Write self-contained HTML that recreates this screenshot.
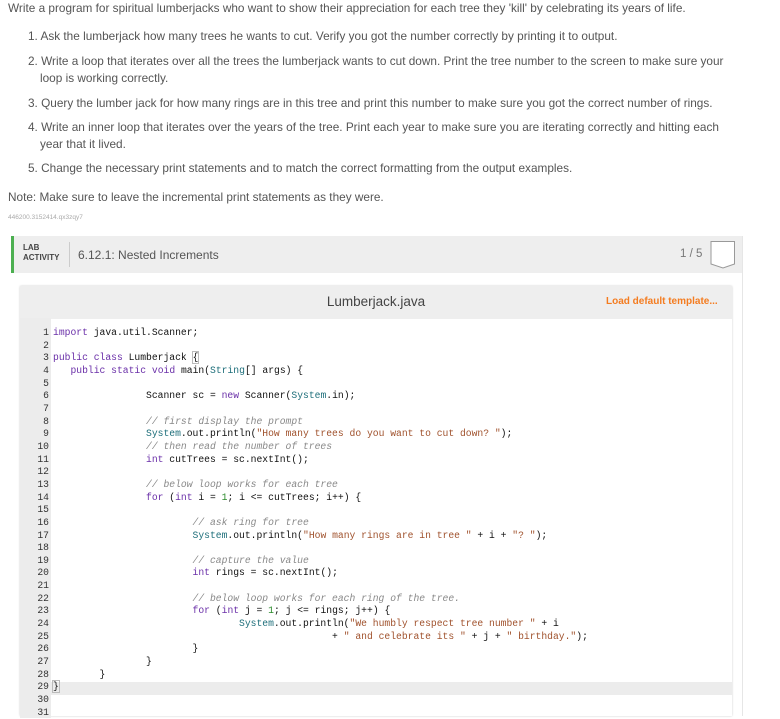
<!DOCTYPE html>
<html><head><style>
body{margin:0;width:780px;height:709px;overflow:hidden;background:#fff;font-family:"Liberation Sans",sans-serif;color:#555;position:relative}
.t{position:absolute;font-size:11.8px;white-space:nowrap;color:#555}
.lab{position:absolute;left:11px;top:236px;width:731px;height:480px;border-right:1px solid #e6e6e6}
.hdr{position:absolute;left:0;top:0;width:731px;height:37px;background:#eee;border-left:3px solid #4caf50;box-sizing:border-box}
.ed{position:absolute;left:20px;top:286px;width:712px;height:430px;box-shadow:0 0 2px #ccc;background:#fff}
.eh{position:absolute;left:0;top:0;width:712px;height:33px;background:#eee}
.gut{position:absolute;left:20px;top:318px;width:31px;height:400px;background:#ececec}
pre{margin:0;position:absolute;font-family:"Liberation Mono",monospace;font-size:9.7px;line-height:12.66px;color:#111}
.k{color:#6a2fa8}.s{color:#a0522d}.c{color:#888;font-style:italic}.y{color:#1d6e7a}.n{color:#2a8a2a}
.hl{position:absolute;left:51px;top:682px;width:681px;height:13px;background:#ececec}
</style></head><body>
<div class="t" style="left:8px;top:1px">Write a program for spiritual lumberjacks who want to show their appreciation for each tree they 'kill' by celebrating its years of life.</div>
<div class="t" style="left:28px;top:29px">1. Ask the lumberjack how many trees he wants to cut. Verify you got the number correctly by printing it to output.</div>
<div class="t" style="left:28px;top:54px">2. Write a loop that iterates over all the trees the lumberjack wants to cut down. Print the tree number to the screen to make sure your</div>
<div class="t" style="left:40px;top:71px">loop is working correctly.</div>
<div class="t" style="left:28px;top:96px">3. Query the lumber jack for how many rings are in this tree and print this number to make sure you got the correct number of rings.</div>
<div class="t" style="left:28px;top:120px">4. Write an inner loop that iterates over the years of the tree. Print each year to make sure you are iterating correctly and hitting each</div>
<div class="t" style="left:40px;top:137px">year that it lived.</div>
<div class="t" style="left:28px;top:161px">5. Change the necessary print statements and to match the correct formatting from the output examples.</div>
<div class="t" style="left:8px;top:190px">Note: Make sure to leave the incremental print statements as they were.</div>
<div class="t" style="left:8px;top:214px;font-size:6.5px;color:#aaa">446200.3152414.qx3zqy7</div>
<div class="lab"><div class="hdr">
<div style="position:absolute;left:9px;top:7px;font-size:8px;font-weight:bold;color:#444;line-height:10px">LAB<br>ACTIVITY</div>
<div style="position:absolute;left:55px;top:6px;width:1px;height:25px;background:#ccc"></div>
<div style="position:absolute;left:64px;top:12px;font-size:12px;color:#555">6.12.1: Nested Increments</div>
<div style="position:absolute;left:666px;top:12px;font-size:11.5px;color:#777">1 / 5</div>
<svg style="position:absolute;left:696px;top:4px" width="26" height="31"><path d="M1 1.5H24.5V24L13 28L1 24Z" fill="#fff" stroke="#999" stroke-width="1"/></svg>
</div></div>
<div class="ed"><div class="eh">
<div style="position:absolute;left:0;width:712px;top:8px;text-align:center;font-size:13.5px;color:#444">Lumberjack.java</div>
<div style="position:absolute;left:586px;top:10px;font-size:10px;font-weight:bold;color:#f47c20">Load default template...</div>
</div></div>
<div class="gut"></div>
<div class="hl"></div>
<pre style="left:22px;top:327px;width:27px;text-align:right;color:#333">1
2
3
4
5
6
7
8
9
10
11
12
13
14
15
16
17
18
19
20
21
22
23
24
25
26
27
28
29
30
31</pre>
<pre style="left:53px;top:327px"><span class="k">import</span> java.util.Scanner;

<span class="k">public</span> <span class="k">class</span> Lumberjack <span style="outline:1px solid #bbb">{</span>
   <span class="k">public</span> <span class="k">static</span> <span class="k">void</span> main(<span class="y">String</span>[] args) {

                Scanner sc = <span class="k">new</span> Scanner(<span class="y">System</span>.in);

                <span class="c">// first display the prompt</span>
                <span class="y">System</span>.out.println(<span class="s">"How many trees do you want to cut down? "</span>);
                <span class="c">// then read the number of trees</span>
                <span class="k">int</span> cutTrees = sc.nextInt();

                <span class="c">// below loop works for each tree</span>
                <span class="k">for</span> (<span class="k">int</span> i = <span class="n">1</span>; i &lt;= cutTrees; i++) {

                        <span class="c">// ask ring for tree</span>
                        <span class="y">System</span>.out.println(<span class="s">"How many rings are in tree "</span> + i + <span class="s">"? "</span>);

                        <span class="c">// capture the value</span>
                        <span class="k">int</span> rings = sc.nextInt();

                        <span class="c">// below loop works for each ring of the tree.</span>
                        <span class="k">for</span> (<span class="k">int</span> j = <span class="n">1</span>; j &lt;= rings; j++) {
                                <span class="y">System</span>.out.println(<span class="s">"We humbly respect tree number "</span> + i
                                                + <span class="s">" and celebrate its "</span> + j + <span class="s">" birthday."</span>);
                        }
                }
        }
<span style="outline:1px solid #bbb">}</span>
</pre>
</body></html>
